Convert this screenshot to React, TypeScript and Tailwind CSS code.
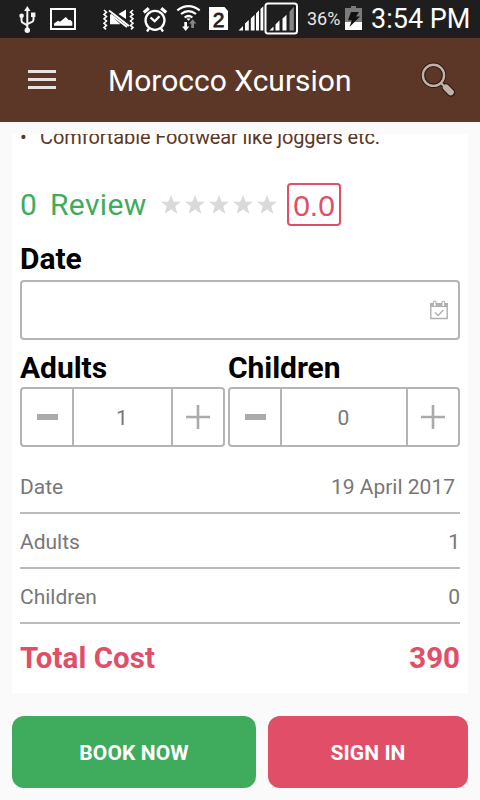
import React from 'react';

const StatusBar: React.FC = () => {
  return (
    <div className="flex h-[38px] items-center bg-[#1e1e1e] text-white">
      {/* USB */}
      <svg className="ml-[18px] h-[38px] w-5 shrink-0" viewBox="18 0 20 38" fill="none" stroke="#f4f4f4" strokeWidth="2">
        <path d="M27.3 9v21M21.5 17v3.5q0 2 2 2.6l3.8 2.2M33.5 16v3.5q0 2-2 2.6l-4.2 2" />
        <path d="M27.3 6l3.2 5h-6.4z" fill="#f4f4f4" stroke="none" />
        <circle cx="27.3" cy="30.2" r="2.7" fill="#f4f4f4" stroke="none" />
        <circle cx="21.6" cy="15.8" r="2.3" fill="#f4f4f4" stroke="none" />
        <path d="M31 12.5h4.4v4.5H31z" fill="#f4f4f4" stroke="none" />
      </svg>
      {/* Screenshot */}
      <svg className="ml-[11px] h-[38px] w-[29px] shrink-0" viewBox="49 0 29 38" fill="#fff">
        <path d="M51 9h24v20H51z" fill="none" stroke="#fff" strokeWidth="2" />
        <path d="M54 25.800v-2.300l4-2.700 2 1 5.800-4.800 3 3.300 1.500-.600 2 2.300v3.800z" />
      </svg>
      {/* Vibrate */}
      <svg className="ml-[24px] h-[38px] w-[35px] shrink-0" viewBox="102 0 35 38" fill="none">
        <path d="M104 10l2.500 2.200-2.500 2.200 2.500 2.200-2.500 2.200 2.500 2.200-2.500 2.200 2.500 2.200-2.500 2.200 2 1.800M133 10l-2.500 2.200 2.500 2.200-2.500 2.200 2.500 2.200-2.500 2.200 2.500 2.200-2.500 2.200 2.500 2.200-2 1.800" stroke="#fff" strokeWidth="1.600" />
        <path d="M110 14.500v9.700h10zM118.500 14l7.500-4.500v9.500z" fill="#fff" />
        <path d="M110.500 15.500v8.500h9.500l-9.500-8.500z" fill="#fff" />
        <path d="M109 10.500l20 15.500" stroke="#fff" strokeWidth="1.900" />
        <path d="M110.500 14.500l16.500 12.500" stroke="#fff" strokeWidth="1.900" />
      </svg>
      {/* Alarm */}
      <svg className="ml-[5px] h-[38px] w-[27px] shrink-0" viewBox="142 0 27 38" fill="none" stroke="#fff" strokeWidth="2.300">
        <circle cx="155" cy="20.300" r="9.500" />
        <path d="M150.500 17.500l4.200 3.700 4.800-5M149 28.500l-2 3M161 28.500l2 3" />
        <path d="M143.800 12.500l5-4.300M161.200 8.200l5 4.300" strokeWidth="3.200" />
      </svg>
      {/* Wifi */}
      <svg className="ml-[7px] h-[38px] w-[26px] shrink-0" viewBox="176 0 26 38" fill="none" stroke="#fff" strokeWidth="2.200">
        <path d="M177.300 10.300q11.200-8.200 22.400 0M181 14q7.500-5.800 15 0M184.600 17.500q3.900-3 7.800 0" />
        <path d="M186.300 18.500h4.400l-2.200 2.200z" fill="#fff" stroke="none" />
        <path d="M184.300 22v4.500h-2.200l3.600 4.500 3.600-4.500H187V22z" fill="#fff" stroke="none" />
        <path d="M191.200 28v-4.500H189l3.700-4.200 3.600 4.200H194V28z" fill="#858585" stroke="none" />
      </svg>
      {/* SIM */}
      <svg className="ml-[6px] h-[38px] w-[22px] shrink-0" viewBox="208 0 22 38">
        <path d="M209 7h15.500l3.500 4v19h-19z" fill="#fff" />
        <text x="218.500" y="26.800" textAnchor="middle" fontFamily="Liberation Sans, sans-serif" fontSize="21" fill="#1e1e1e" stroke="#1e1e1e" strokeWidth=".8">2</text>
      </svg>
      {/* Signal */}
      <svg className="ml-[8px] h-[38px] w-[62px] shrink-0" viewBox="238 0 62 38" fill="#fff">
        <path d="M238.500 30.500l4.500-4.500v4.500zM245 30.500v-7l3.800-3.600v10.600zM250.800 30.500V18.500l3.800-3.800v15.800zM256 30.500V13.500l3-3.200v20.200zM260.500 30.500V9l2.800-2.700v24.200z" />
        <rect x="265.500" y="3.500" width="31.500" height="30" rx="2.500" fill="none" stroke="#fff" strokeWidth="2" />
        <path d="M269.500 30.500l4-4v4zM275.500 30.500v-6l4-4.300v10.300zM282.500 30.500v-12l4-3.700v15.700z" />
        <path d="M289.500 30.500v-18.800l4.300-5v23.800z" fill="#858585" />
      </svg>
      <span className="ml-[7px] w-[36px] shrink-0 whitespace-nowrap font-['Roboto',sans-serif] text-[18px] leading-[40px] text-[#e8e8e8]">36%</span>
      {/* Battery */}
      <svg className="ml-[1px] h-[38px] w-[20px] shrink-0" viewBox="344 0 20 38">
        <path d="M345 8h6V6h5v2h6v14h-17z" fill="#7b7b7b" />
        <path d="M345 22h17v8h-17z" fill="#fff" />
        <path d="M351 12h8l-3 4.500h4l-10.500 10.500 2.300-6.800h-3.800z" fill="#111" />
      </svg>
      <span className="ml-[7px] whitespace-nowrap font-['Roboto',sans-serif] text-[27px] leading-[38px]">3:54 PM</span>
    </div>
  );
};

const Header: React.FC = () => {
  return (
    <header className="flex h-[84px] items-center bg-[#5c3727] text-white">
      <div className="mb-px ml-7 flex w-7 flex-col gap-[5px]">
        <div className="h-[3px] bg-[#e9e3e0]" />
        <div className="h-[3px] bg-[#e9e3e0]" />
        <div className="h-[3px] bg-[#e9e3e0]" />
      </div>
      <h1 className="ml-[52px] flex-1 whitespace-nowrap pt-[2px] text-[30px] leading-9">Morocco Xcursion</h1>
      <svg className="mr-6 h-9 w-9" viewBox="420 62 36 36" fill="none">
        <circle cx="433.500" cy="75.300" r="10.500" stroke="#2d1a12" strokeWidth="4.500" />
        <path d="M441 83l3 3" stroke="#2d1a12" strokeWidth="4" />
        <path d="M446 87.500l5 5" stroke="#2d1a12" strokeWidth="8.500" strokeLinecap="round" />
        <circle cx="433.500" cy="75.300" r="10.600" stroke="#c1b1a9" strokeWidth="2.400" />
        <path d="M440.500 82.500l4 4" stroke="#c1b1a9" strokeWidth="2.200" />
        <path d="M446 87.500l4.700 4.700" stroke="#c1b1a9" strokeWidth="6.300" strokeLinecap="round" />
      </svg>
    </header>
  );
};

const Star: React.FC = () => (
  <svg className="h-5 w-5" viewBox="0 0 20 20" fill="#dadada">
    <path d="M10 0l2.700 6.700H20l-5.700 4.600 2 7.500L10 14.500l-6.300 4.300 2-7.500L0 6.700h7.300z" />
  </svg>
);

const Stepper: React.FC<{ label: string; value: number; className: string }> = ({ label, value, className }) => {
  return (
    <div className={className}>
      <h2 className="whitespace-nowrap text-[30px] font-bold leading-[38px] tracking-[-0.05px] text-black">{label}</h2>
      <div className="flex h-[60px] rounded-[4px] border-2 border-[#b4b4b4] text-[#aaa]">
        <button className="flex w-[52px] items-center justify-center border-r-2 border-[#b4b4b4]">
          <span className="h-[6px] w-[21px] bg-[#aaa]" />
        </button>
        <span className="flex flex-1 items-center justify-center pr-px pt-[3px] text-[21px] text-[#777]">{value}</span>
        <button className="flex w-[52px] items-center justify-center border-l-2 border-[#b4b4b4]">
          <svg className="mr-px h-6 w-6" viewBox="0 0 24 24" stroke="#aaa" strokeWidth="2.600">
            <path d="M0 12h24M12 0v24" />
          </svg>
        </button>
      </div>
    </div>
  );
};

const App: React.FC = () => {
  const rows = [
    { label: 'Date', value: '19 April 2017', className: 'pr-[5px]' },
    { label: 'Adults', value: '1', className: '' },
    { label: 'Children', value: '0', className: '' },
  ];

  return (
    <div className="h-[800px] w-[480px] overflow-hidden bg-[#fafafa] font-['Roboto',sans-serif]">
      <StatusBar />
      <Header />

      <main className="mx-3 mt-3 h-[559px] overflow-hidden bg-white px-2">
        {/* Tail of the scrolled description list */}
        <div className="flex h-[49px] items-start overflow-hidden text-[20px] leading-[26px] tracking-[-0.12px] text-[#5c3727]">
          <span className="-mt-[10px] w-5">•</span>
          <span className="-mt-[10px] whitespace-nowrap">Comfortable Footwear like joggers etc.</span>
        </div>

        <div className="flex h-[43px] items-center">
          <div className="flex w-[141px] text-[30px] leading-[43px] text-[#3fab5d]">
            <span className="w-[30px]">0</span>
            <span className="tracking-[0.35px]">Review</span>
          </div>
          <div className="flex gap-1">
            {[1, 2, 3, 4, 5].map((n) => (
              <Star key={n} />
            ))}
          </div>
          <span className="ml-[10px] flex h-[43px] w-[54px] items-center justify-center rounded-[4px] border-2 border-[#e14e67] pt-[2px] font-['Liberation_Sans',sans-serif] text-[30px] text-[#e14e67]">
            0.0
          </span>
        </div>

        <h2 className="mt-[14px] text-[30px] font-bold leading-[38px] tracking-[-0.05px] text-black">Date</h2>
        <div className="mt-[2px] flex h-[60px] items-center justify-end rounded-[4px] border-2 border-[#b4b4b4] pr-[9px]">
          <svg className="h-5 w-5" viewBox="0 0 20 20" fill="none" stroke="#b0b0b0">
            <path d="M1.800 4v14.500h16.400V4" strokeWidth="1.400" />
            <path d="M1 3h18v4H1z" fill="#b0b0b0" stroke="none" />
            <path d="M4.300 6V2.500q0-1.500 1.400-1.500t1.400 1.500V6M12.900 6V2.500q0-1.500 1.400-1.500t1.400 1.500V6" fill="#fff" strokeWidth="1.100" />
            <path d="M6 12.500l3.200 3 5.200-5.500" strokeWidth="1.400" />
          </svg>
        </div>

        <div className="mt-[9px] flex gap-[3px]">
          <Stepper label="Adults" value={1} className="w-[205px]" />
          <Stepper label="Children" value={0} className="w-[232px]" />
        </div>

        <div className="mt-3 text-[21px] text-[#777]">
          {rows.map((row) => (
            <div key={row.label} className="flex h-[55px] items-center justify-between border-b-2 border-[#bbb] pt-[4px]">
              <span>{row.label}</span>
              <span className={row.className}>{row.value}</span>
            </div>
          ))}
        </div>

        <div className="flex h-[68px] items-center justify-between text-[29.5px] font-bold text-[#e14e67]">
          <span className="tracking-[0.05px]">Total Cost</span>
          <span>390</span>
        </div>
      </main>

      <div className="mx-3 mt-[23px] flex gap-3 text-[21px] font-bold tracking-[0.1px] text-white">
        <button className="h-[72px] w-[244px] rounded-xl bg-[#3fab5d] pt-[3px]">BOOK NOW</button>
        <button className="h-[72px] w-[200px] rounded-xl bg-[#e14e67] pt-[3px]">SIGN IN</button>
      </div>
    </div>
  );
};

export default App;
